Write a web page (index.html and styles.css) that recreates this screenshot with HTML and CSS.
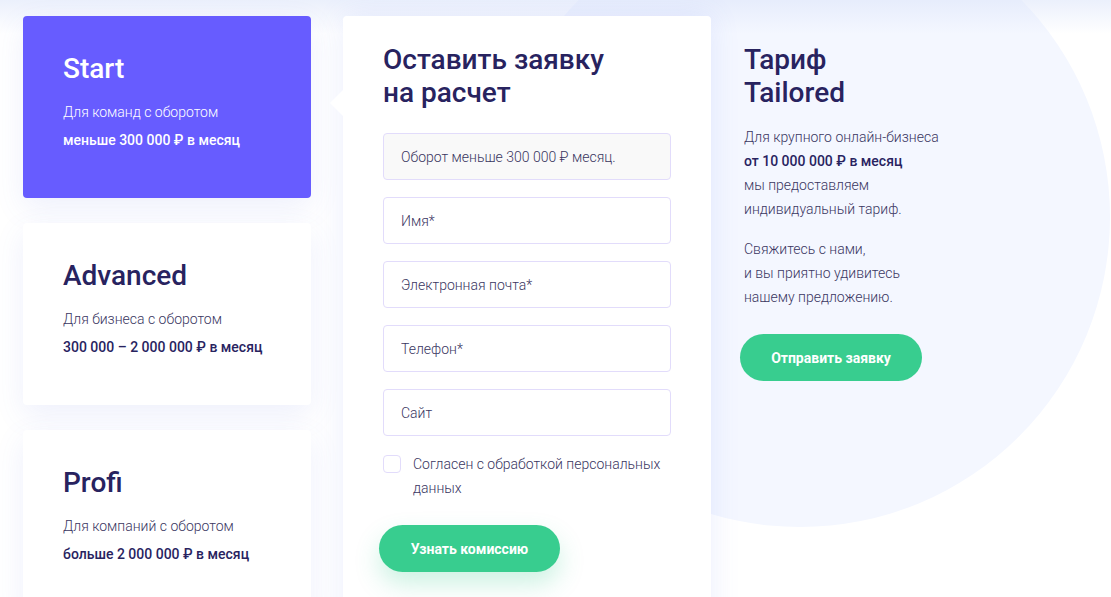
FILE: index.html
```html
<!DOCTYPE html>
<html lang="ru">
<head>
    <meta charset="UTF-8">
    <meta name="viewport" content="width=device-width, initial-scale=1.0">
    <title>Тарифы</title>
    <link rel="stylesheet" href="styles.css">
</head>
<body>
    <div class="bg-circle"></div>
    <div class="top-fade"></div>

    <section class="tariffs">
        <!-- Список тарифов -->
        <div class="plans">
            <div class="plan plan-active">
                <h2>Start</h2>
                <p>Для команд с оборотом</p>
                <p class="amount">меньше 300 000 ₽ в месяц</p>
            </div>
            <div class="plan">
                <h2>Advanced</h2>
                <p>Для бизнеса с оборотом</p>
                <p class="amount">300 000 – 2 000 000 ₽ в месяц</p>
            </div>
            <div class="plan">
                <h2>Profi</h2>
                <p>Для компаний с оборотом</p>
                <p class="amount">больше 2 000 000 ₽ в месяц</p>
            </div>
        </div>

        <!-- Форма заявки -->
        <div class="request">
            <h2>Оставить заявку<br>на расчет</h2>
            <form class="request-form">
                <input type="text" class="field field-disabled" value="Оборот меньше 300 000 ₽ месяц." disabled>
                <input type="text" class="field" placeholder="Имя*">
                <input type="email" class="field" placeholder="Электронная почта*">
                <input type="tel" class="field" placeholder="Телефон*">
                <input type="text" class="field" placeholder="Сайт">
                <label class="agree">
                    <input type="checkbox">
                    <span class="agree-box"></span>
                    <span>Согласен с обработкой персональных данных</span>
                </label>
                <button type="button" class="btn btn-glow">Узнать комиссию</button>
            </form>
        </div>

        <!-- Индивидуальный тариф -->
        <div class="tailored">
            <h2>Тариф<br>Tailored</h2>
            <p>Для крупного онлайн-бизнеса<br><b>от 10 000 000 ₽ в месяц</b><br>мы предоставляем<br>индивидуальный тариф.</p>
            <p>Свяжитесь с нами,<br>и вы приятно удивитесь<br>нашему предложению.</p>
            <button type="button" class="btn btn-send">Отправить заявку</button>
        </div>
    </section>
</body>
</html>
```

FILE: styles.css
```css
body {
    font-family: Roboto, 'Liberation Sans', sans-serif;
    margin: 0;
    padding: 0;
    background: #fff;
    color: #28235f;
    overflow: hidden;
    position: relative;
    min-height: 100vh;
}
.bg-circle {
    position: absolute;
    left: 490px;
    top: -93px;
    width: 620px;
    height: 620px;
    border-radius: 50%;
    background: #f4f7ff;
}
.top-fade {
    position: absolute;
    left: 0;
    right: 0;
    top: 0;
    height: 34px;
    background: linear-gradient(rgba(222, 230, 250, 0.6), rgba(222, 230, 250, 0));
    pointer-events: none;
}
h2 {
    margin: 0;
    font-size: 28px;
    line-height: 33px;
    font-weight: 500;
    color: #28235f;
}
p {
    margin: 0;
    font-size: 14px;
}
.tariffs {
    position: relative;
    display: flex;
    align-items: flex-start;
    padding: 16px 0 0 23px;
}
.plans {
    width: 288px;
    display: flex;
    flex-direction: column;
    gap: 25px;
    flex-shrink: 0;
}
.plan {
    height: 182px;
    box-sizing: border-box;
    padding: 36px 40px 0;
    background: white;
    border-radius: 4px;
    box-shadow: 0 10px 30px rgba(90, 110, 230, 0.1);
}
.plan h2 {
    margin-bottom: 13px;
}
.plan p {
    line-height: 28px;
    font-weight: 300;
    color: #3a365f;
}
.plan .amount {
    font-weight: 500;
    color: #28235f;
}
.plan-active {
    background: #675cff;
}
.plan-active h2,
.plan-active p,
.plan-active .amount {
    color: white;
}
.request {
    position: relative;
    width: 368px;
    flex-shrink: 0;
    box-sizing: border-box;
    margin-left: 32px;
    padding: 27px 40px 60px;
    background: white;
    border-radius: 4px;
    box-shadow: 0 0 30px rgba(90, 115, 240, 0.12);
}
.request::before {
    content: "";
    position: absolute;
    left: -13px;
    top: 74px;
    border-right: 13px solid white;
    border-top: 13px solid transparent;
    border-bottom: 13px solid transparent;
}
.request h2 {
    margin-bottom: 24px;
}
.request-form {
    display: flex;
    flex-direction: column;
    gap: 17px;
}
.field {
    height: 47px;
    box-sizing: border-box;
    padding: 0 17px;
    border: 1px solid #e2dcfb;
    border-radius: 4px;
    background: white;
    font-family: inherit;
    font-size: 14px;
    font-weight: 300;
    color: #3a365f;
    outline: none;
}
.field::placeholder {
    color: #3a365f;
    opacity: 1;
}
.field-disabled {
    background: #f9f9f9;
    -webkit-text-fill-color: #3a365f;
}
.agree {
    display: flex;
    align-items: flex-start;
    gap: 12px;
    margin-top: -1px;
    font-size: 14px;
    line-height: 24px;
    font-weight: 300;
    color: #3a365f;
    cursor: pointer;
}
.agree input {
    display: none;
}
.agree-box {
    flex-shrink: 0;
    width: 18px;
    height: 18px;
    box-sizing: border-box;
    margin-top: 3px;
    border: 1px solid #e2dcfb;
    border-radius: 4px;
}
.btn {
    height: 47px;
    border: none;
    border-radius: 24px;
    background: #38cd8f;
    color: white;
    font-family: inherit;
    font-size: 14px;
    font-weight: 700;
    cursor: pointer;
}
.btn-glow {
    align-self: flex-start;
    width: 181px;
    margin: 8px 0 0 -4px;
    box-shadow: 0 12px 24px rgba(56, 205, 143, 0.25);
}
.tailored {
    margin-left: 33px;
    padding-top: 27px;
}
.tailored p {
    line-height: 24px;
    font-weight: 300;
    color: #3a365f;
    margin-top: 16px;
}
.tailored b {
    font-weight: 500;
    color: #28235f;
}
.btn-send {
    width: 182px;
    margin: 25px 0 0 -4px;
}
```
